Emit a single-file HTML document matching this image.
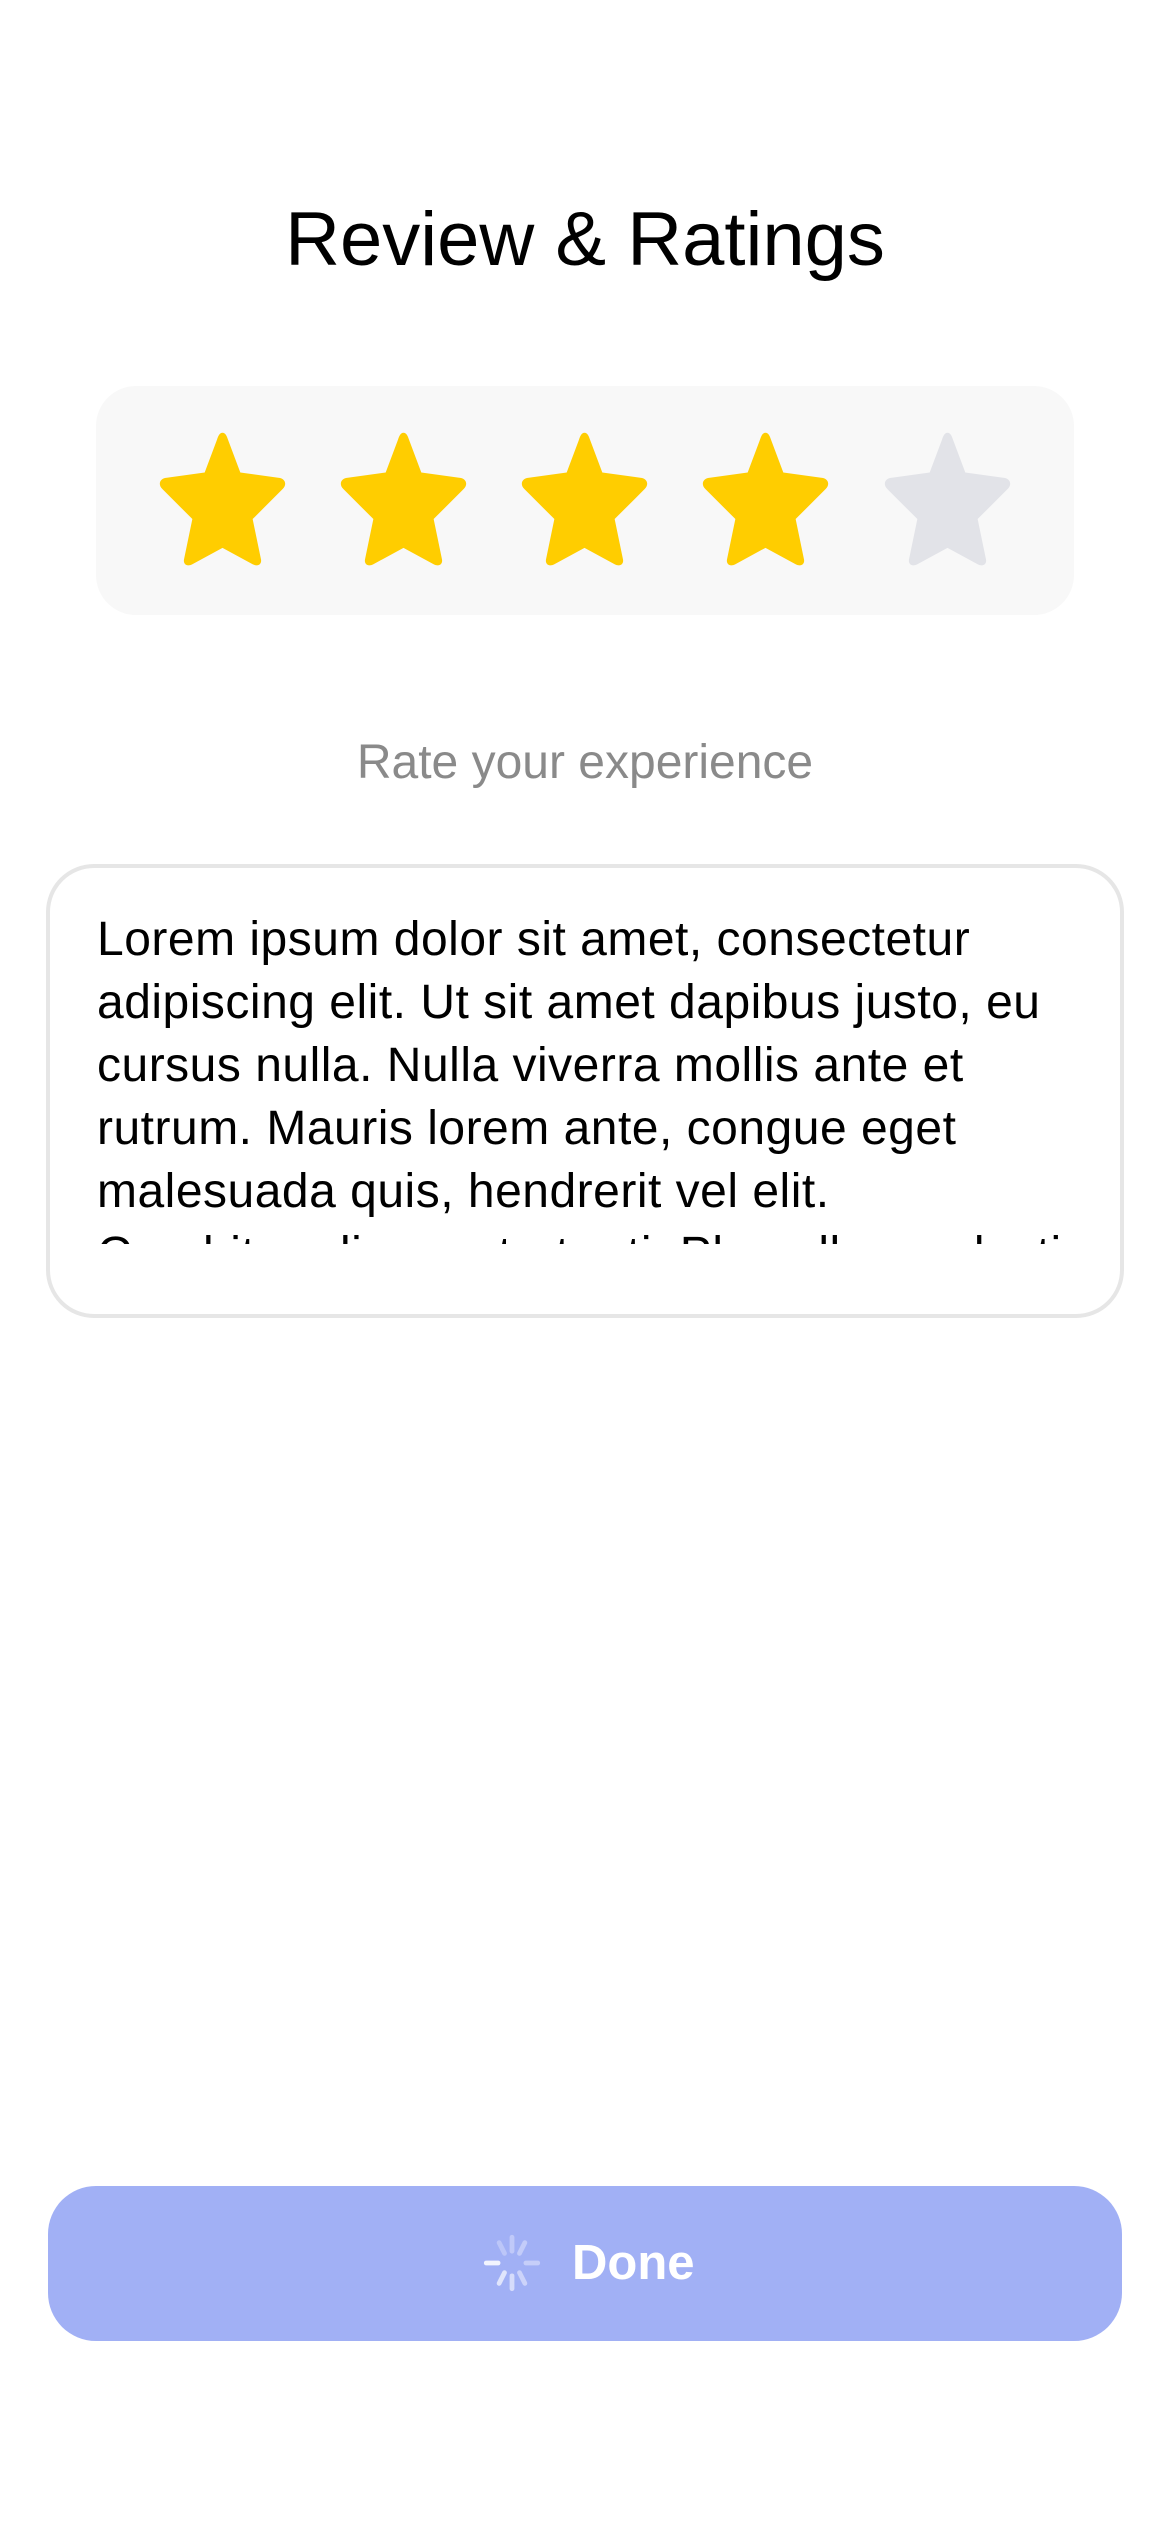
<!DOCTYPE html>
<html><head><meta charset="utf-8"><style>
html,body{margin:0;padding:0;background:#fff;}
body{width:1170px;height:2532px;position:relative;overflow:hidden;font-family:"Liberation Sans",sans-serif;}
.title{position:absolute;top:192px;left:0;width:1170px;text-align:center;font-size:76px;color:#000;line-height:96px;}
.panel{position:absolute;left:96px;top:386px;width:978px;height:229px;background:#f8f8f8;border-radius:40px;}
.star{position:absolute;top:430px;width:137px;height:137px;}
.rate{position:absolute;top:735px;left:0;width:1170px;text-align:center;font-size:48px;color:#8a8a8a;line-height:56px;}
.box{position:absolute;left:46px;top:864px;width:1070px;height:446px;border:4px solid #e6e6e6;border-radius:48px;}
.txt{position:absolute;left:97px;top:908px;width:1010px;height:336px;overflow:hidden;font-size:48px;letter-spacing:0.5px;line-height:63px;color:#000;white-space:nowrap;}
.btn{position:absolute;left:48px;top:2186px;width:1074px;height:155px;background:#a1b0f5;border-radius:48px;}
.done{position:absolute;left:572px;top:2234px;font-size:49px;font-weight:bold;color:#fff;line-height:58px;}
.spin{position:absolute;left:482px;top:2233px;width:60px;height:60px;}
</style></head><body>
<div class="title">Review &amp; Ratings</div>
<div class="panel"></div>
<svg class="star" style="left:154px" viewBox="0 0 100 100"><path fill="#ffcd00" d="M50 2 C52 2 53 4 54 7 L63 31 L92 35 C96 36 97 40 94 43 L72 65 L78 94 C79 98 76 100 72 98 L50 86 L28 98 C24 100 21 98 22 94 L28 65 L6 43 C3 40 4 36 8 35 L37 31 L46 7 C47 4 48 2 50 2 Z"/></svg>
<svg class="star" style="left:335px" viewBox="0 0 100 100"><path fill="#ffcd00" d="M50 2 C52 2 53 4 54 7 L63 31 L92 35 C96 36 97 40 94 43 L72 65 L78 94 C79 98 76 100 72 98 L50 86 L28 98 C24 100 21 98 22 94 L28 65 L6 43 C3 40 4 36 8 35 L37 31 L46 7 C47 4 48 2 50 2 Z"/></svg>
<svg class="star" style="left:516px" viewBox="0 0 100 100"><path fill="#ffcd00" d="M50 2 C52 2 53 4 54 7 L63 31 L92 35 C96 36 97 40 94 43 L72 65 L78 94 C79 98 76 100 72 98 L50 86 L28 98 C24 100 21 98 22 94 L28 65 L6 43 C3 40 4 36 8 35 L37 31 L46 7 C47 4 48 2 50 2 Z"/></svg>
<svg class="star" style="left:697px" viewBox="0 0 100 100"><path fill="#ffcd00" d="M50 2 C52 2 53 4 54 7 L63 31 L92 35 C96 36 97 40 94 43 L72 65 L78 94 C79 98 76 100 72 98 L50 86 L28 98 C24 100 21 98 22 94 L28 65 L6 43 C3 40 4 36 8 35 L37 31 L46 7 C47 4 48 2 50 2 Z"/></svg>
<svg class="star" style="left:879px" viewBox="0 0 100 100"><path fill="#e2e3e8" d="M50 2 C52 2 53 4 54 7 L63 31 L92 35 C96 36 97 40 94 43 L72 65 L78 94 C79 98 76 100 72 98 L50 86 L28 98 C24 100 21 98 22 94 L28 65 L6 43 C3 40 4 36 8 35 L37 31 L46 7 C47 4 48 2 50 2 Z"/></svg>
<div class="rate">Rate your experience</div>
<div class="box"></div>
<div class="txt">Lorem ipsum dolor sit amet, consectetur<br>adipiscing elit. Ut sit amet dapibus justo, eu<br>cursus nulla. Nulla viverra mollis ante et<br>rutrum. Mauris lorem ante, congue eget<br>malesuada quis, hendrerit vel elit.<br>Curabitur aliquam tortor ti. Phasellus molestie</div>
<div class="btn"></div>
<svg class="spin" viewBox="0 0 56 56" stroke-linecap="round" stroke-width="4.5">
<line x1="28" y1="4" x2="28" y2="17" stroke="#c0c9f9"/>
<line x1="40" y1="9" x2="35" y2="19" stroke="#c3ccf9"/>
<line x1="52" y1="28" x2="41" y2="28" stroke="#c6cef9"/>
<line x1="40" y1="47" x2="35" y2="37" stroke="#ccd3fa"/>
<line x1="28" y1="52" x2="28" y2="40" stroke="#d6dcfb"/>
<line x1="16" y1="47" x2="21" y2="37" stroke="#e0e5fc"/>
<line x1="4" y1="28" x2="15" y2="28" stroke="#f2f4fe"/>
<line x1="16" y1="9" x2="21" y2="19" stroke="#bcc6f8"/>
</svg>
<div class="done">Done</div>
</body></html>
